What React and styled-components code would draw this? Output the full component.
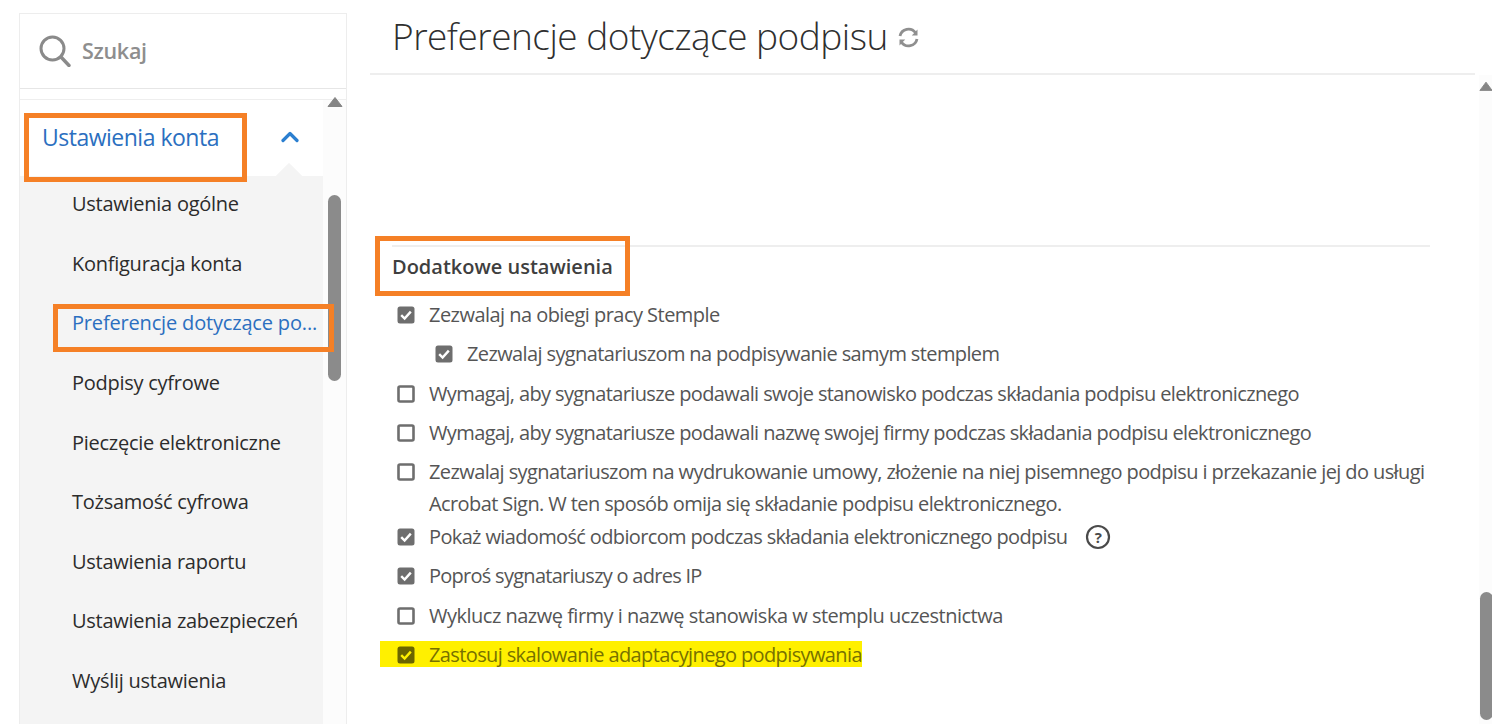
import React from "react";
import styled, { createGlobalStyle } from "styled-components";

const Global = createGlobalStyle`
  html, body { margin: 0; padding: 0; background: #fff; }
  body { font-family: "Open Sans", "Noto Sans", "Liberation Sans", sans-serif; }
  * { box-sizing: border-box; }
`;
const Page = styled.div`
  width: 1492px; height: 724px; overflow: hidden; display: flex; background: #fff;
`;
const Sidebar = styled.aside`
  width: 328px; margin: 13px 0 0 19px; height: 711px; display: flex; flex-direction: column;
  border-left: 1px solid #ededed; border-right: 1px solid #ededed; flex: none;
`;
const SearchBox = styled.div`
  height: 76px; flex: none; display: flex; align-items: center; gap: 11px; padding: 0 0 0 19px;
  border-top: 1px solid #ededed; border-bottom: 1px solid #e6e6e6;
`;
const SearchText = styled.span`
  font-size: 21.5px; font-weight: 600; color: #8e8e8e; letter-spacing: -0.3px; padding-bottom: 2px;
`;
const NavArea = styled.div`
  flex: 1; margin-top: 10px; display: flex; min-height: 0; border-top: 1px solid #eeeeee;
`;
const NavList = styled.nav`
  width: 303px; flex: none; display: flex; flex-direction: column;
`;
const NavHead = styled.div`
  position: relative; height: 76px; flex: none; display: flex; justify-content: space-between;
  padding: 19px 24px 0 22px; font-size: 23px; line-height: 36px; color: #2b6fc0; letter-spacing: -0.5px;
`;
const Notch = styled.span`
  position: absolute; right: 20px; bottom: -1px; width: 28px; height: 14px; overflow: hidden;
  &::after {
    content: ""; position: absolute; left: 4px; top: 4px; width: 20px; height: 20px; background: #f4f4f4;
    transform: rotate(45deg);
  }
`;
const SubList = styled.ul`
  list-style: none; margin: 0; padding: 0; flex: 1; background: #f4f4f4;
`;
const SubItem = styled.li`
  position: relative; height: 59.6px; display: flex; align-items: center; padding: 0 0 0 52px;
  font-size: 20px; letter-spacing: ${p => (p.$active ? "-0.17px" : "-0.26px")}; white-space: nowrap;
  color: ${p => (p.$active ? "#2b6fc0" : "#2c2c2c")};
  &:first-child { margin-top: -2px; }
`;
const Callout = styled.span`
  position: absolute; border: 5px solid #f58026; pointer-events: none;
`;
const HeadCallout = styled(Callout)`
  left: 4px; top: 13px; width: 223px; height: 69px;
`;
const ItemCallout = styled(Callout)`
  left: 33px; top: 11px; width: 281px; height: 48px; z-index: 2;
`;
const ScrollGutter = styled.div`
  flex: 1; display: flex; flex-direction: column; align-items: center; background: #fcfcfc;
`;
const Thumb = styled.div`
  width: 13px; border-radius: 7px; background: #8b8b8b; flex: none;
`;
const SideThumb = styled(Thumb)`
  margin-top: 87px; height: 186px;
`;
const Arrow = styled.svg`
  flex: none; display: block;
`;
const SideArrow = styled(Arrow)`
  margin-top: -4px;
`;
const MainArrow = styled(Arrow)`
  margin-top: 5px;
`;
const MainThumb = styled(Thumb)`
  margin-top: 499px; height: 128px;
`;
const Main = styled.main`
  flex: 1; margin-left: 23px; display: flex; flex-direction: column; min-width: 0;
`;
const TitleBar = styled.header`
  height: 75px; flex: none; width: 1105px; display: flex; align-items: center; gap: 10px;
  padding: 0 0 2px 22px; border-bottom: 2px solid #eeeeee;
`;
const Title = styled.h1`
  margin: 0; font-size: 37px; font-weight: 300; color: #2f2f2f; letter-spacing: -0.5px; line-height: 1;
`;
const RefreshIcon = styled.svg`
  flex: none; margin: 3px 0 0 -1px; display: block;
`;
const MainBody = styled.div`
  flex: 1; display: flex; min-height: 0;
`;
const Content = styled.div`
  width: 1087px; margin-left: 22px; padding-top: 170px; flex: none;
`;
const Section = styled.section`
  border-top: 2px solid #eeeeee; width: 1038px;
`;
const SectionTitle = styled.h2`
  position: relative; margin: 0; height: 48px; padding-top: 4px; font-size: 20px; font-weight: 600; line-height: 32px;
  color: #3f3f3f; letter-spacing: 0;
`;
const SectionCallout = styled(Callout)`
  left: -17px; top: -11px; width: 255px; height: 60px;
`;
const Options = styled.div`
  display: flex; flex-direction: column; width: 1055px;
`;
const Option = styled.div`
  position: relative; display: flex; align-items: flex-start; gap: 14px; min-height: 39.3px;
  padding: 4px 0 3px ${p => (p.$indent ? "43px" : "5px")};
  margin-bottom: ${p => (p.$wrapped ? "-6px" : "0")};
  font-size: 20px; line-height: 32px; color: #555; letter-spacing: ${p => p.$spacing || "-0.62px"};
`;
const HighlightRow = styled(Option)`
  color: #777100;
  &::before {
    content: ""; position: absolute; left: -12px; top: 6px; width: 482px; height: 26px; background: #fff000; z-index: 0;
  }
  & > * { position: relative; z-index: 1; }
`;
const OptionLabel = styled.span`
  display: flex; align-items: center; gap: 17px;
`;
const Box = styled.svg`
  flex: none; margin-top: 7px; display: block;
`;

const Check = ({ on, tone = "#6e6e6e", tick = "#fff" }) => (
  <Box width="18" height="18" viewBox="0 0 18 18">
    {on ? (
      <>
        <rect x="0.5" y="0.5" width="17" height="17" rx="2.5" fill={tone} />
        <path d="M4.2 9.2 L7.6 12.6 L13.8 5.6" fill="none" stroke={tick} strokeWidth="2.4" />
      </>
    ) : (
      <rect x="1.5" y="1.5" width="15" height="15" rx="1.5" fill="none" stroke={tone} strokeWidth="2.6" />
    )}
  </Box>
);

const Help = () => (
  <svg width="26" height="26" viewBox="0 0 26 26">
    <circle cx="13" cy="13" r="11" fill="none" stroke="#4a4a4a" strokeWidth="2.2" />
    <text x="13" y="18.5" textAnchor="middle" fontSize="15" fontWeight="700" fontFamily="Open Sans, sans-serif" fill="#4a4a4a">?</text>
  </svg>
);

const Refresh = () => (
  <RefreshIcon width="23" height="23" viewBox="0 0 23 23" fill="none" stroke="#8f8f8f" strokeWidth="2.8">
    <path d="M3 10 A8.6 8.6 0 0 1 18.5 6.8" />
    <path d="M20 13 A8.6 8.6 0 0 1 4.5 16.2" />
    <path d="M20.5 3.5 L20.5 9.5 L14.8 9.5 Z" fill="#8f8f8f" stroke="none" />
    <path d="M2.5 19.5 L2.5 13.5 L8.2 13.5 Z" fill="#8f8f8f" stroke="none" />
  </RefreshIcon>
);

const Search = () => (
  <svg width="32" height="32" viewBox="0 0 32 32" fill="none" stroke="#8a8a8a" strokeWidth="3">
    <circle cx="13.5" cy="13.5" r="11.5" />
    <path d="M22 22 L30 30.5" strokeLinecap="round" strokeWidth="3.4" />
  </svg>
);

const Chevron = () => (
  <svg width="18" height="36" viewBox="0 0 18 36" fill="none" stroke="#2b7fd0" strokeWidth="3.2">
    <path d="M2 21.5 L9 14.5 L16 21.5" strokeLinecap="round" strokeLinejoin="round" />
  </svg>
);

const items = [
  "Ustawienia ogólne",
  "Konfiguracja konta",
  "Preferencje dotyczące po...",
  "Podpisy cyfrowe",
  "Pieczęcie elektroniczne",
  "Tożsamość cyfrowa",
  "Ustawienia raportu",
  "Ustawienia zabezpieczeń",
  "Wyślij ustawienia",
];

export default function App() {
  return (
    <Page>
      <Global />
      <Sidebar>
        <SearchBox>
          <Search />
          <SearchText>Szukaj</SearchText>
        </SearchBox>
        <NavArea>
          <NavList>
            <NavHead>
              <span>Ustawienia konta</span>
              <Chevron />
              <Notch />
              <HeadCallout />
            </NavHead>
            <SubList>
              {items.map((t, i) => (
                <SubItem key={t} $active={i === 2}>
                  {t}
                  {i === 2 && <ItemCallout />}
                </SubItem>
              ))}
            </SubList>
          </NavList>
          <ScrollGutter>
            <SideArrow width="16" height="12" viewBox="0 0 16 12">
              <path d="M8 1.5 L15 10.5 L1 10.5 Z" fill="#858585" stroke="#858585" strokeLinejoin="round" />
            </SideArrow>
            <SideThumb />
          </ScrollGutter>
        </NavArea>
      </Sidebar>
      <Main>
        <TitleBar>
          <Title>Preferencje dotyczące podpisu</Title>
          <Refresh />
        </TitleBar>
        <MainBody>
          <Content>
            <Section>
              <SectionTitle>
                Dodatkowe ustawienia
                <SectionCallout />
              </SectionTitle>
              <Options>
                <Option $spacing="-0.54px"><Check on /><span>Zezwalaj na obiegi pracy Stemple</span></Option>
                <Option $indent><Check on /><span>Zezwalaj sygnatariuszom na podpisywanie samym stemplem</span></Option>
                <Option><Check /><span>Wymagaj, aby sygnatariusze podawali swoje stanowisko podczas składania podpisu elektronicznego</span></Option>
                <Option><Check /><span>Wymagaj, aby sygnatariusze podawali nazwę swojej firmy podczas składania podpisu elektronicznego</span></Option>
                <Option $wrapped $spacing="-0.6px"><Check /><span>Zezwalaj sygnatariuszom na wydrukowanie umowy, złożenie na niej pisemnego podpisu i przekazanie jej do usługi Acrobat Sign. W ten sposób omija się składanie podpisu elektronicznego.</span></Option>
                <Option $spacing="-0.64px"><Check on /><OptionLabel>Pokaż wiadomość odbiorcom podczas składania elektronicznego podpisu <Help /></OptionLabel></Option>
                <Option $spacing="-0.73px"><Check on /><span>Poproś sygnatariuszy o adres IP</span></Option>
                <Option $spacing="-0.5px"><Check /><span>Wyklucz nazwę firmy i nazwę stanowiska w stemplu uczestnictwa</span></Option>
                <HighlightRow $spacing="-0.62px"><Check on tone="#6b6500" tick="#fff000" /><span>Zastosuj skalowanie adaptacyjnego podpisywania</span></HighlightRow>
              </Options>
            </Section>
          </Content>
          <ScrollGutter>
            <MainArrow width="14" height="13" viewBox="0 0 16 13">
              <path d="M8 1.5 L15 11 L1 11 Z" fill="#858585" stroke="#858585" strokeLinejoin="round" />
            </MainArrow>
            <MainThumb />
          </ScrollGutter>
        </MainBody>
      </Main>
    </Page>
  );
}
